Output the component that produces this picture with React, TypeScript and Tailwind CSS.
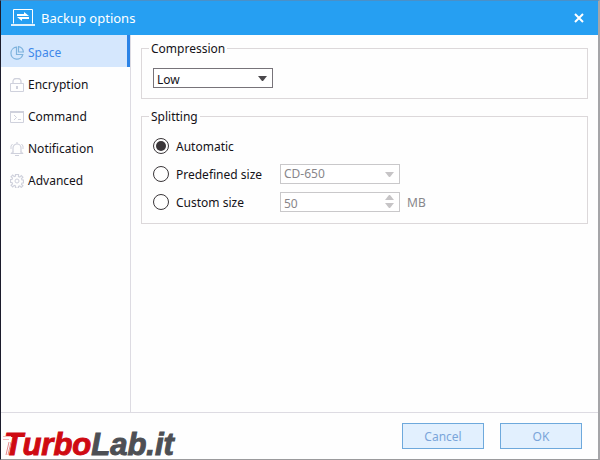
import { useState, type ReactNode } from "react";

const line = {
  fill: "none",
  stroke: "currentColor",
  strokeWidth: 1,
} as const;

function LaptopIcon() {
  return (
    <svg width="24" height="18" viewBox="0 0 24 18" {...line}>
      <path d="M2.5 14.5v-14h19v14" />
      <path d="M0 16h24" strokeWidth="2" opacity="0.85" />
      <path
        d="M6 5h7V3l5 4H6zM18 8H6l5 4v-2h7z"
        fill="currentColor"
        stroke="none"
      />
    </svg>
  );
}

function SpaceIcon() {
  return (
    <svg width="14" height="14" viewBox="0 0 14 14" {...line}>
      <path d="M6.5 1.2A6 6 0 1 0 12.8 8.500H6.500z" strokeWidth="1.2" />
      <path d="M8.5 .6v5.400h4.900A6 6 0 0 0 8.500 .6z" strokeWidth="1.2" />
    </svg>
  );
}

function LockIcon() {
  return (
    <svg width="14" height="14" viewBox="0 0 14 14" {...line}>
      <path d="M0.5 5.5h13v8H0.5z" />
      <path d="M3 5V3.500a3 3 0 0 1 3-3h2a3 3 0 0 1 3 3V5" strokeWidth="1.3" />
      <path d="M7 8v3" strokeWidth="2" />
    </svg>
  );
}

function CommandIcon() {
  return (
    <svg width="14" height="14" viewBox="0 0 14 14" {...line}>
      <path d="M0.5 1.5h13v11H0.5z" />
      <path d="M0 2h14" strokeWidth="2" />
      <path d="M4 5l2.5 2.5L4 10M8 9.5h3" />
    </svg>
  );
}

function BellIcon() {
  return (
    <svg width="14" height="14" viewBox="0 0 14 14" {...line}>
      <path
        d="M1 11.5h12M3 11V6a4 4 0 0 1 8 0v5M7 0v2M5 13.5h4"
        strokeWidth="1.2"
      />
      <path d="M2.5 2L1 4v3M11.5 2L13 4v3M1 11.5l2-2M13 11.5l-2-2" />
    </svg>
  );
}

function GearIcon() {
  return (
    <svg width="14" height="14" viewBox="0 0 14 14" {...line}>
      <path
        d="M5.5 0.5h3v2l1.3.6 1.5-1.5 1.6 1.6-1.4 1.5.5 1.3h1.5v3H12l-.5 1.3 1.4 1.5-1.6 1.6-1.5-1.5-1.3.6v1.5h-3V12l-1.3-.6-1.5 1.5-1.6-1.6 1.4-1.5L2 8.5H.5v-3H2l.5-1.3-1.4-1.5 1.6-1.6 1.5 1.5 1.3-.6z"
        strokeWidth="1.2"
      />
      <circle cx="7" cy="7" r="2" />
    </svg>
  );
}

const tabs = [
  { name: "Space", Icon: SpaceIcon },
  { name: "Encryption", Icon: LockIcon },
  { name: "Command", Icon: CommandIcon },
  { name: "Notification", Icon: BellIcon },
  { name: "Advanced", Icon: GearIcon },
];

function Arrow({ up, className }: { up?: boolean; className?: string }) {
  return (
    <svg
      width="9"
      height="5"
      viewBox="0 0 9 5"
      fill="currentColor"
      className={className}
    >
      <path d={up ? "M0 5h9L5 0H4z" : "M0 0h9L5 5H4z"} />
    </svg>
  );
}

function Group({ title, children }: { title: string; children: ReactNode }) {
  return (
    <fieldset className="min-w-0 border border-[#dcd8da] pl-[11px]">
      <legend className="-ml-1 px-0.5 pt-0.5 leading-4">{title}</legend>
      {children}
    </fieldset>
  );
}

function Radio({
  label,
  checked,
  onChange,
}: {
  label: string;
  checked: boolean;
  onChange: () => void;
}) {
  return (
    <label className="flex w-[127px] items-center gap-[7px] whitespace-nowrap">
      <input
        type="radio"
        name="splitting"
        checked={checked}
        onChange={onChange}
        className="size-4 shrink-0 appearance-none rounded-full border border-[#3a3639] bg-white bg-clip-content p-0.5 checked:bg-[#3a3639]"
      />
      <span className="pt-0.5">{label}</span>
    </label>
  );
}

function Watermark() {
  return (
    <div className="relative mt-4 mr-auto pl-[3px] font-['Liberation_Sans',sans-serif] text-[31px] leading-none font-bold text-[#4d4f54] italic [-webkit-text-stroke:1px_currentColor]">
      <span className="text-[#cf0a12]">Turbo</span>Lab.it
      <svg
        width="12"
        height="24"
        viewBox="0 0 12 24"
        className="absolute top-1 left-0.5"
        {...line}
      >
        <path d="M0 3.5h8M0 6.5h6" stroke="#f3b9bb" />
        <path d="M6 9L3 22M8 9L5 22" stroke="#e58a8e" />
      </svg>
    </div>
  );
}

export default function App() {
  const [tab, setTab] = useState("Space");
  const [splitting, setSplitting] = useState("Automatic");

  return (
    <div className="flex h-screen flex-col border-t border-r-2 border-b border-l border-t-[#4a90c8] border-r-[#a5a5a8] border-b-[#9a9a9c] border-l-[#1c1c2c] bg-[#fefefe] font-['Noto_Sans',sans-serif] text-[12px] text-[#141218]">
      <header className="flex h-[34px] shrink-0 items-center gap-1.5 bg-[#269ff2] pr-3 pl-2.5 text-white">
        <LaptopIcon />
        <h1 className="grow pt-0.5 text-[13px]">Backup options</h1>
        <button aria-label="Close" className="p-0.5">
          <svg width="10" height="10" viewBox="0 0 10 10" {...line}>
            <path d="M1 1l8 8M9 1L1 9" strokeWidth="2" />
          </svg>
        </button>
      </header>

      <div className="flex min-h-0 grow">
        <nav className="w-[130px] shrink-0 border-r border-[#dddbe2]">
          {tabs.map(({ name, Icon }) => (
            <button
              key={name}
              onClick={() => setTab(name)}
              className={
                "flex h-8 w-full items-center gap-1 border-r-3 pt-[3px] pl-[9px] " +
                (tab === name
                  ? "border-[#2b83e6] bg-[#d5e7fd] text-[#3f87ea]"
                  : "border-transparent")
              }
            >
              <span
                className={tab === name ? "text-[#7fb3dd]" : "text-[#cfd1dc]"}
              >
                <Icon />
              </span>
              {name}
            </button>
          ))}
        </nav>

        <main className="flex grow flex-col gap-2 pt-1 pr-2.5 pl-2.5">
          <Group title="Compression">
            <div className="relative mt-[11px] mb-2.5 w-[120px]">
              <select
                aria-label="Compression"
                className="block h-5 w-full appearance-none border border-[#777379] bg-white px-[3px] pt-0.5"
              >
                <option>Low</option>
                <option>Normal</option>
                <option>High</option>
              </select>
              <Arrow className="pointer-events-none absolute top-2 right-1.5 text-[#4b484c]" />
            </div>
          </Group>

          <Group title="Splitting">
            <div className="my-[11px] flex flex-col gap-2">
              <div className="flex h-5 items-center">
                <Radio
                  label="Automatic"
                  checked={splitting === "Automatic"}
                  onChange={() => setSplitting("Automatic")}
                />
              </div>
              <div className="flex h-5 items-center">
                <Radio
                  label="Predefined size"
                  checked={splitting === "Predefined"}
                  onChange={() => setSplitting("Predefined")}
                />
                <div className="relative w-[120px]">
                  <select
                    aria-label="Predefined size"
                    disabled={splitting !== "Predefined"}
                    className="block h-5 w-full appearance-none border border-[#c9c8ca] bg-white px-[3px] text-[#88868a] opacity-100"
                  >
                    <option>CD-650</option>
                    <option>CD-700</option>
                  </select>
                  <Arrow className="pointer-events-none absolute top-2 right-1.5 text-[#c6c4c6]" />
                </div>
              </div>
              <div className="flex h-5 items-center">
                <Radio
                  label="Custom size"
                  checked={splitting === "Custom"}
                  onChange={() => setSplitting("Custom")}
                />
                <div className="relative w-[120px]">
                  <input
                    aria-label="Custom size in MB"
                    defaultValue="50"
                    disabled={splitting !== "Custom"}
                    className="block h-5 w-full border border-[#c9c8ca] bg-white px-[3px] pt-0.5 text-[#88868a]"
                  />
                  <div className="absolute top-[3px] right-1.5 flex flex-col gap-[3px] text-[#c6c4c6]">
                    <Arrow up />
                    <Arrow />
                  </div>
                </div>
                <span className="ml-[7px] pt-0.5 text-[#88868a]">MB</span>
              </div>
            </div>
          </Group>
        </main>
      </div>

      <footer className="flex h-[47px] shrink-0 items-center gap-4 border-t border-[#dddbe2] pr-4">
        <Watermark />
        <button className="h-[26px] w-[82px] border border-[#6ea9dc] bg-[#e2f0fe] pt-0.5 text-[#7ba5da]">
          Cancel
        </button>
        <button className="h-[26px] w-[82px] border border-[#6ea9dc] bg-[#e2f0fe] pt-0.5 text-[#7ba5da]">
          OK
        </button>
      </footer>
    </div>
  );
}
